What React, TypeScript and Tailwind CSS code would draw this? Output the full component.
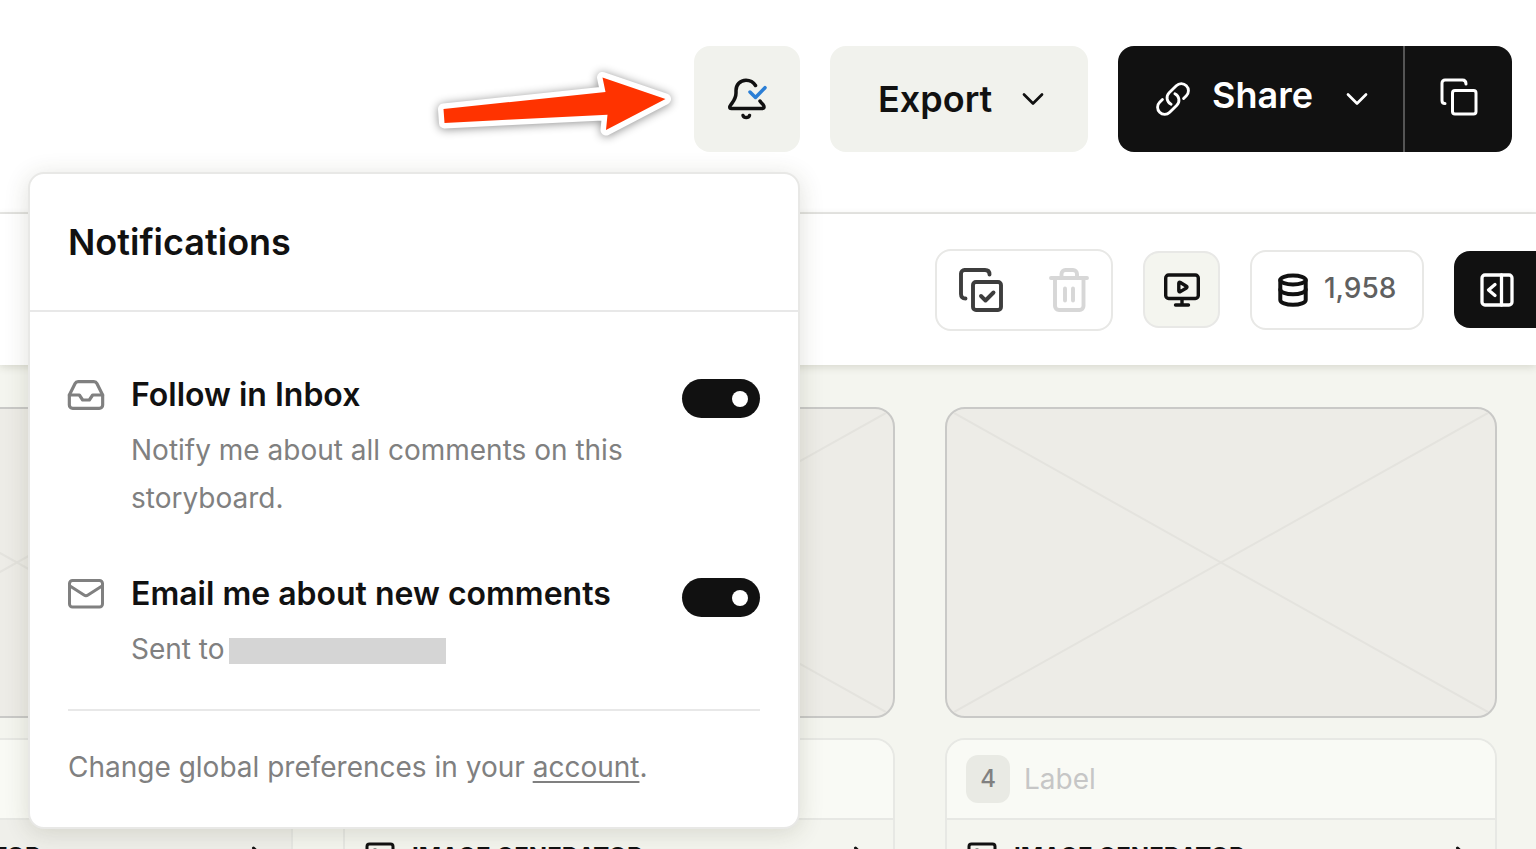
import { useState } from "react";
import type { ReactNode } from "react";
import { ChevronRight, Inbox } from "lucide-react";

const ChevronDown = () => (
  <svg width="22" height="14" viewBox="0 0 22 14" fill="none" stroke="currentColor" strokeWidth="2.700" strokeLinecap="round" strokeLinejoin="round">
    <path d="M2 2.500l9 9 9-9" />
  </svg>
);

const BellCheckIcon = () => (
  <svg width="40" height="42" viewBox="0 0 40 42" fill="none" strokeWidth="3.500" strokeLinecap="round" strokeLinejoin="round">
    <path
      stroke="#111"
      d="M28.500 7.500C26.500 4.200 23.500 2.200 19 2.200C13 2.200 9 7 9 12.500V15C9 20.500 7 22.500 4 26.500C2.500 28.500 2 30.500 4.500 30.500H35C37.500 30.500 37.500 28.500 36 26.500C35 25.500 34 24.500 33 23"
    />
    <path stroke="#111" d="M16 37.500c1 2.800 5.500 2.800 6.500 0" />
    <path stroke="#2b7fd6" d="M23 14l5.500 5.500L38 9.700" />
  </svg>
);

const LinkIcon = () => (
  <svg width="38" height="38" viewBox="0 0 24 24" fill="none" stroke="currentColor" strokeWidth="1.800" strokeLinecap="round" strokeLinejoin="round">
    <path d="M13.190 8.688a4.500 4.500 0 0 1 1.242 7.244l-4.500 4.500a4.500 4.500 0 0 1-6.364-6.364l1.757-1.757m13.350-.622 1.757-1.757a4.500 4.500 0 0 0-6.364-6.364l-4.500 4.500a4.500 4.500 0 0 0 1.242 7.244" />
  </svg>
);

const CopyIcon = () => (
  <svg width="38" height="38" viewBox="0 0 38 38" fill="none" stroke="currentColor" strokeWidth="3" strokeLinecap="round" strokeLinejoin="round">
    <rect x="12.500" y="12.500" width="23.500" height="23.500" rx="2.500" />
    <path d="M5 25.500C3 25.500 2 24.500 2 22.500V5a3 3 0 0 1 3-3h17.500c2.500 0 3.500 1.500 3.500 4" />
  </svg>
);

const SelectIcon = () => (
  <svg width="44" height="44" viewBox="0 0 44 44" fill="none" stroke="currentColor" strokeWidth="3.900" strokeLinecap="round" strokeLinejoin="round">
    <rect x="14" y="14" width="28" height="28" rx="3" />
    <path d="M6.500 30.500C3.500 30.500 2 29 2 26V5.500A3.500 3.500 0 0 1 5.500 2H26c3 0 4.500 1.500 4.500 4.500" />
    <path d="M22 28l4.500 4.500 8-8" />
  </svg>
);

const TrashIcon = () => (
  <svg width="40" height="44" viewBox="0 0 40 44" fill="none" stroke="currentColor" strokeWidth="3.900" strokeLinecap="round" strokeLinejoin="round">
    <path d="M2 10h36M6 10v28a4 4 0 0 0 4 4h20.500a4 4 0 0 0 4-4V10" />
    <path d="M12.500 10V6a4 4 0 0 1 4-4h7.500a4 4 0 0 1 4 4v4M16 20.500v12M24 20.500v12" />
  </svg>
);

const PresentIcon = () => (
  <svg width="36" height="34" viewBox="0 0 36 34" fill="none" stroke="currentColor" strokeWidth="3.400" strokeLinecap="round" strokeLinejoin="round">
    <rect x="1.700" y="2" width="32.600" height="23.500" rx="3" />
    <path d="M18 26v6M11.500 32h13" />
    <path d="M14.800 10.300v7.400c0 1 .8 1.400 1.600.9l6-3.600c.8-.5.8-1.300 0-1.800l-6-3.700c-.8-.5-1.600-.1-1.600.8Z" />
  </svg>
);

const DatabaseIcon = () => (
  <svg width="30" height="34" viewBox="0 0 30 34" fill="none" stroke="currentColor" strokeWidth="4" strokeLinecap="round" strokeLinejoin="round">
    <ellipse cx="15" cy="7" rx="12.700" ry="4.500" />
    <path d="M2.300 7v20c0 2.600 5.600 4.700 12.700 4.700s12.700-2.100 12.700-4.700V7" />
    <path d="M2.300 16.500c0 2.600 5.600 4.700 12.700 4.700s12.700-2.100 12.700-4.700" />
  </svg>
);

const PanelIcon = () => (
  <svg width="34" height="34" viewBox="0 0 34 34" fill="none" stroke="currentColor" strokeWidth="3.300" strokeLinecap="round" strokeLinejoin="round">
    <rect x="2" y="2" width="30" height="30" rx="3" />
    <path d="M21.500 2v30M15 11.500L8.500 17l6.500 5.500" />
  </svg>
);

const MailIcon = () => (
  <svg width="36" height="30" viewBox="0 0 36 30" fill="none" stroke="currentColor" strokeWidth="3" strokeLinecap="round" strokeLinejoin="round">
    <rect x="1.500" y="1.500" width="33" height="26.500" rx="3" />
    <path d="M2 7l14 9c1.500 1 2.500 1 4 0l14-9" />
  </svg>
);

const GeneratorIcon = () => (
  <svg width="32" height="30" viewBox="0 0 32 30" fill="none" stroke="currentColor" strokeWidth="3" strokeLinecap="round" strokeLinejoin="round">
    <rect x="3" y="2" width="26" height="26" rx="2.500" />
    <circle cx="11" cy="10" r="2" />
    <path d="M5 25l8-7 5 4 5-5 5 4" />
  </svg>
);

const PointerArrow = () => (
  <svg
    width="256"
    height="106"
    viewBox="0 0 256 106"
    className="absolute top-0 right-full mr-[14px] overflow-visible drop-shadow-[0_1px_5px_rgba(0,0,0,0.45)]"
  >
    <path
      d="M19.500 63L181.500 46L178.500 31.500L241.500 53L182 84L183.500 68.700L20.500 77Z"
      fill="#ff3300"
      stroke="#fff"
      strokeWidth="11"
      strokeLinejoin="round"
      paintOrder="stroke"
    />
  </svg>
);

type PreferenceProps = {
  id: string;
  icon: ReactNode;
  title: string;
  children: ReactNode;
};

const Preference = ({ id, icon, title, children }: PreferenceProps) => {
  const [enabled, setEnabled] = useState(true);

  return (
    <div className="flex items-start">
      <div className="flex h-12 w-[63px] shrink-0 items-center text-[#808080]">{icon}</div>
      <div className="flex-1">
        <label htmlFor={id} className="block text-[32px] leading-12 font-semibold text-[#111]">
          {title}
        </label>
        <div className="mt-[7px] text-[28px] leading-12 text-[#808080]">{children}</div>
      </div>
      <input
        id={id}
        type="checkbox"
        checked={enabled}
        onChange={() => setEnabled(!enabled)}
        className="mt-2 flex h-[39px] w-[78px] shrink-0 appearance-none items-center justify-start rounded-full bg-[#c8c8c8] px-3 before:size-4 before:rounded-full before:bg-white before:content-[''] checked:justify-end checked:bg-[#111]"
      />
    </div>
  );
};

const NotificationsPopover = () => (
  <div className="absolute top-full right-0 z-10 mt-5 w-[772px] rounded-2xl border-2 border-[#e8e8e6] bg-white shadow-[0_4px_24px_rgba(60,60,30,0.16)]">
    <div className="flex h-[138px] items-center border-b-2 border-[#e8e8e8] px-[38px]">
      <h2 className="text-[36px] leading-12 font-semibold text-[#111]">Notifications</h2>
    </div>
    <div className="px-[38px] pt-[59px] pb-9">
      <div className="flex flex-col gap-12">
        <Preference id="follow-inbox" icon={<Inbox size={40} strokeWidth={1.9} className="-ml-[2px]" />} title="Follow in Inbox">
          Notify me about all comments on this storyboard.
        </Preference>
        <Preference id="email-comments" icon={<MailIcon />} title="Email me about new comments">
          <div className="flex items-center gap-1">
            Sent to
            <span className="mt-1 h-[26px] w-[217px] bg-[#d5d5d5]"></span>
          </div>
        </Preference>
      </div>
      <p className="mt-9 border-t-2 border-[#e8e8e8] pt-8 text-[28px] leading-12 text-[#808080]">
        Change global preferences in your{" "}
        <a href="#account" className="underline decoration-2 underline-offset-4">
          account
        </a>
        .
      </p>
    </div>
  </div>
);

const Frame = ({ number, active = false }: { number: number; active?: boolean }) => (
  <article className="w-[552px] shrink-0">
    <div className="h-[311px] overflow-hidden rounded-[20px] border-2 border-[#c9c9c7] bg-[#edece7]">
      <svg className="size-full" viewBox="0 0 548 306" preserveAspectRatio="none" stroke="#e4e3de" strokeWidth="2">
        <path d="M0 0L548 306M548 0L0 306" />
      </svg>
    </div>
    <div className="mt-5 overflow-hidden rounded-[20px] border-2 border-[#e7e8e4]">
      <div className="flex h-20 items-center gap-[14px] border-b-2 border-[#e7e8e4] bg-[#f9faf5] px-[19px]">
        <span className="flex h-12 w-11 items-center justify-center rounded-xl bg-[#e9eae4] text-[24px] font-medium text-[#808080]">
          {number}
        </span>
        <input
          type="text"
          aria-label={`Label for frame ${number}`}
          placeholder="Label"
          className="min-w-0 flex-1 bg-transparent text-[28px] text-[#808080] placeholder:text-[#c6c6c6] focus:outline-none"
        />
      </div>
      <button
        type="button"
        className={`flex h-[74px] w-full items-center px-[19px] text-[#111] ${active ? "bg-[#efefea]" : "bg-[#f4f5ef]"}`}
      >
        <GeneratorIcon />
        <span className="ml-4 text-[24px] font-bold">IMAGE GENERATOR</span>
        <ChevronRight size={36} className="-mr-1 ml-auto" />
      </button>
    </div>
  </article>
);

const App = () => {
  return (
    <div className="flex h-screen flex-col overflow-hidden bg-[#f4f5ef] font-['Inter',sans-serif] text-[#111]">
      {/* Header */}
      <header className="flex shrink-0 justify-end gap-[30px] border-b-2 border-[#e8e8e6] bg-white pt-[46px] pr-6 pb-[60px]">
        <div className="relative z-10">
          <PointerArrow />
          <button type="button" aria-label="Notifications" className="flex h-[106px] w-[106px] items-center justify-center rounded-2xl bg-[#f1f2ed]">
            <BellCheckIcon />
          </button>
          <NotificationsPopover />
        </div>
        <button type="button" className="flex h-[106px] w-[258px] items-center justify-between rounded-2xl bg-[#f1f2ed] pr-11 pl-12 text-[36px] font-semibold">
          Export
          <ChevronDown />
        </button>
        <div className="flex h-[106px] overflow-hidden rounded-2xl bg-[#111] text-white">
          <button type="button" className="flex w-[287px] items-center border-r-2 border-[#555] pr-[35px] pl-9 text-[36px] font-semibold">
            <LinkIcon />
            <span className="mr-auto ml-5 pb-2">Share</span>
            <ChevronDown />
          </button>
          <button type="button" aria-label="Copy" className="flex w-[107px] items-center justify-center pb-1">
            <CopyIcon />
          </button>
        </div>
      </header>

      {/* Toolbar */}
      <div className="flex h-[151px] shrink-0 items-center justify-end gap-[30px] bg-white shadow-[0_2px_8px_rgba(60,60,30,0.16)]">
        <div className="flex h-[82px] w-[178px] items-center justify-between rounded-2xl border-2 border-[#e8e8e6] px-[22px]">
          <button type="button" aria-label="Select frames" className="text-[#3d3d3d]">
            <SelectIcon />
          </button>
          <button type="button" aria-label="Delete" disabled className="text-[#d7d7d7]">
            <TrashIcon />
          </button>
        </div>
        <button type="button" aria-label="Present" className="flex size-[77px] items-center justify-center rounded-2xl border-2 border-[#e8e8e6] bg-[#f4f5ef]">
          <PresentIcon />
        </button>
        <button type="button" className="flex h-[80px] w-[174px] items-center gap-4 rounded-2xl border-2 border-[#e8e8e6] pl-[26px] text-[28px] font-medium text-[#606060]">
          <span className="text-[#111]">
            <DatabaseIcon />
          </span>
          <span className="pb-1">1,958</span>
        </button>
        <button type="button" aria-label="Open panel" className="flex h-[77px] w-[82px] items-center rounded-l-2xl bg-[#111] pl-[26px] text-white">
          <PanelIcon />
        </button>
      </div>

      {/* Frames */}
      <main className="flex min-h-0 flex-1 justify-end gap-[50px] overflow-hidden pt-[42px] pr-[39px]">
        <Frame number={2} active />
        <Frame number={3} />
        <Frame number={4} />
      </main>
    </div>
  );
};

export default App;
